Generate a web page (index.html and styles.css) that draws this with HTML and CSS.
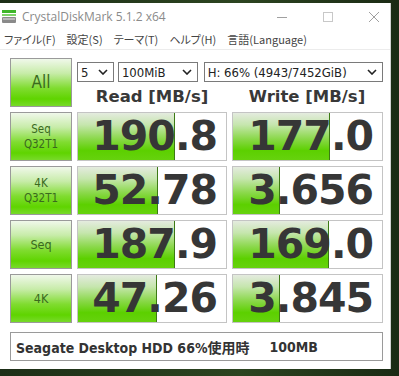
FILE: index.html
```html
<!DOCTYPE html>
<html lang="ja">
<head>
  <meta charset="UTF-8" />
  <title>CrystalDiskMark 5.1.2 x64</title>
  <link rel="stylesheet" href="styles.css">
</head>
<body>
  <div class="window">
    <div class="titlebar">
      <svg class="appicon" width="14" height="16" viewBox="0 0 14 16">
        <rect x="0" y="2" width="14" height="3" fill="#3fb62a"/>
        <rect x="0" y="6" width="14" height="2" fill="#7fd46a"/>
        <rect x="0" y="9" width="14" height="6" rx="1" fill="#8a8a8a"/>
        <rect x="1" y="10" width="12" height="2" fill="#b8b8b8"/>
      </svg>
      <span class="title">CrystalDiskMark 5.1.2 x64</span>
      <div class="controls">
        <svg width="12" height="12" viewBox="0 0 12 12"><line x1="1" y1="6.5" x2="11" y2="6.5" stroke="#a0a0a0"/></svg>
        <svg width="12" height="12" viewBox="0 0 12 12"><rect x="1.5" y="1.5" width="9" height="9" fill="none" stroke="#c8c8c8"/></svg>
        <svg width="12" height="12" viewBox="0 0 12 12"><path d="M1 1 L11 11 M11 1 L1 11" stroke="#a0a0a0"/></svg>
      </div>
    </div>
    <div class="menubar">
      <span>ファイル(F)</span>
      <span>設定(S)</span>
      <span>テーマ(T)</span>
      <span>ヘルプ(H)</span>
      <span>言語(Language)</span>
    </div>

    <div class="client">
      <div class="board">
        <div class="btn btn-all">All</div>
        <div class="top">
          <div class="selects">
            <div class="sel sel-count">5<svg class="chev" viewBox="0 0 10 6"><path d="M1 1 L5 5 L9 1" /></svg></div>
            <div class="sel sel-size">100MiB<svg class="chev" viewBox="0 0 10 6"><path d="M1 1 L5 5 L9 1" /></svg></div>
            <div class="sel sel-drive">H: 66% (4943/7452GiB)<svg class="chev" viewBox="0 0 10 6"><path d="M1 1 L5 5 L9 1" /></svg></div>
          </div>
          <div class="heads">
            <div class="head">Read [MB/s]</div>
            <div class="head">Write [MB/s]</div>
          </div>
        </div>

        <div class="btn">Seq<br>Q32T1</div>
        <div class="val"><div class="fill" style="width:97px"></div><span>190.8</span></div>
        <div class="val"><div class="fill" style="width:97px"></div><span>177.0</span></div>

        <div class="btn">4K<br>Q32T1</div>
        <div class="val"><div class="fill" style="width:80px"></div><span>52.78</span></div>
        <div class="val"><div class="fill" style="width:47px"></div><span>3.656</span></div>

        <div class="btn btn-mid">Seq</div>
        <div class="val"><div class="fill" style="width:97px"></div><span>187.9</span></div>
        <div class="val"><div class="fill" style="width:96px"></div><span>169.0</span></div>

        <div class="btn btn-mid">4K</div>
        <div class="val"><div class="fill" style="width:79px"></div><span>47.26</span></div>
        <div class="val"><div class="fill" style="width:47px"></div><span>3.845</span></div>
      </div>

      <div class="comment">Seagate Desktop HDD 66%使用時　<span class="size">100MB</span></div>
    </div>
  </div>
</body>
</html>
```

FILE: styles.css
```css
body {
  margin: 0;
  width: 399px;
  height: 376px;
  overflow: hidden;
  background: linear-gradient(90deg, #1d2e17, #2c4420 60%, #1a2a14);
  font-family: "DejaVu Sans", "Noto Sans CJK JP", sans-serif;
}
.window {
  margin-top: 3px;
  width: 391px;
  height: 366px;
  background: #ffffff;
  box-sizing: border-box;
  border-right: 1px solid #d0d0d0;
}
.titlebar {
  height: 27px;
  display: flex;
  align-items: center;
  padding-left: 2px;
}
.appicon {
  margin-top: -2px;
}
.title {
  margin-left: 6px;
  font-family: "Open Sans", "Noto Sans", sans-serif;
  font-size: 12px;
  color: #8a8a8a;
}
.controls {
  margin-left: auto;
  display: flex;
  gap: 34px;
  padding-right: 10px;
}
.menubar {
  height: 19px;
  display: flex;
  gap: 11px;
  padding-left: 4px;
  font-family: "Noto Sans CJK JP", sans-serif;
  font-feature-settings: "palt";
  font-size: 11px;
  line-height: 19px;
  color: #444;
  border-bottom: 1px solid #ececec;
}
.client {
  padding: 8px 0 0 10px;
}
.board {
  display: grid;
  grid-template-columns: 62px 150px 151px;
  grid-template-rows: 49px 49px 49px 49px 49px;
  column-gap: 5px;
  row-gap: 5px;
}
.btn {
  box-sizing: border-box;
  border: 1px solid #9a9a9a;
  background: linear-gradient(180deg, #f0f8ea 0%, #c8ecaa 30%, #80dc30 62%, #5fd400 85%, #78da2a 100%);
  display: flex;
  align-items: center;
  justify-content: center;
  text-align: center;
  font-family: "DejaVu Sans Condensed", "DejaVu Sans", sans-serif;
  font-size: 11.5px;
  line-height: 15px;
  color: #3a6a1e;
}
.btn-all {
  font-size: 17px;
}
.btn-mid {
  font-size: 12.5px;
}
.top {
  grid-column: 2 / 4;
  display: flex;
  flex-direction: column;
}
.selects {
  display: flex;
  gap: 4px;
  margin-top: 4px;
}
.sel {
  box-sizing: border-box;
  height: 20px;
  border: 1px solid #7a7a7a;
  display: flex;
  align-items: center;
  padding-left: 3px;
  font-family: "DejaVu Sans Condensed", "DejaVu Sans", sans-serif;
  font-size: 13px;
  color: #222;
}
.sel-count { width: 37px; }
.sel-size { width: 80px; }
.sel-drive { width: 180px; margin-left: 2px; }
.chev {
  margin-left: auto;
  margin-right: 5px;
  width: 10px;
  height: 6px;
  fill: none;
  stroke: #222;
  stroke-width: 1.6;
}
.heads {
  display: flex;
  gap: 5px;
  flex: 1;
  align-items: center;
}
.head {
  width: 150px;
  text-align: center;
  font-weight: bold;
  font-size: 16.5px;
  color: #383838;
  padding-top: 3px;
}
.val {
  box-sizing: border-box;
  border: 1px solid #c4c4c4;
  background: #ffffff;
  display: grid;
}
.fill {
  grid-area: 1 / 1;
  box-sizing: border-box;
  border-right: 1px solid #3c7a14;
  background: linear-gradient(180deg, #e4ebdf 0%, #c6e6ae 25%, #8ad84a 55%, #5cd000 80%, #66d20e 100%);
}
.val span {
  grid-area: 1 / 1;
  align-self: center;
  justify-self: end;
  padding-right: 9px;
  font-weight: bold;
  font-size: 41px;
  letter-spacing: -1px;
  line-height: 47px;
  color: #363636;
}
.comment {
  margin-top: 9px;
  width: 373px;
  height: 29px;
  box-sizing: border-box;
  border: 1px solid #9a9a9a;
  display: flex;
  align-items: center;
  padding-left: 5px;
  font-family: "DejaVu Sans Condensed", "DejaVu Sans", "Noto Sans CJK JP", sans-serif;
  font-weight: bold;
  font-size: 14px;
  color: #333;
}
.comment .size {
  margin-left: 6px;
}
```
